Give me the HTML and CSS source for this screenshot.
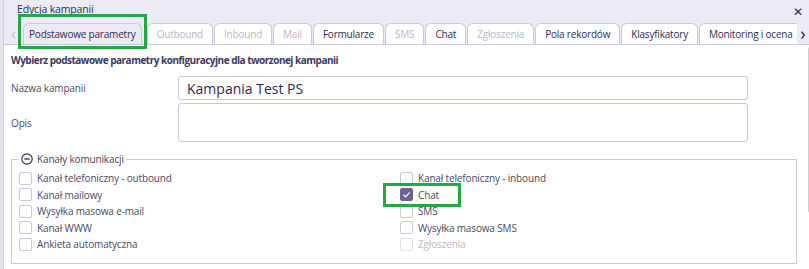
FILE: index.html
```html
<!DOCTYPE html>
<html lang="pl">
<head>
    <meta charset="UTF-8">
    <title>Edycja kampanii</title>
    <link rel="stylesheet" href="styles.css">
</head>
<body>

<div class="dialog">
    <!-- Header with title and tabs -->
    <div class="dialog-head">
        <div class="title-row">
            <span class="title">Edycja kampanii</span>
            <span class="close">&#x2715;</span>
        </div>
        <div class="tabs-row">
            <span class="arrow arrow-left">&#x2039;</span>
            <div class="tabs">
                <span class="tab active">Podstawowe parametry</span>
                <span class="tab disabled">Outbound</span>
                <span class="tab disabled">Inbound</span>
                <span class="tab disabled">Mail</span>
                <span class="tab">Formularze</span>
                <span class="tab disabled">SMS</span>
                <span class="tab">Chat</span>
                <span class="tab disabled">Zgłoszenia</span>
                <span class="tab">Pola rekordów</span>
                <span class="tab">Klasyfikatory</span>
                <span class="tab">Monitoring i ocena</span>
            </div>
            <span class="arrow arrow-right">&#x203A;</span>
        </div>
    </div>

    <!-- Content -->
    <div class="content">
        <p class="intro">Wybierz podstawowe parametry konfiguracyjne dla tworzonej kampanii</p>

        <div class="form-row">
            <label class="form-label" for="name">Nazwa kampanii</label>
            <input class="form-input" id="name" type="text" value="Kampania Test PS">
        </div>
        <div class="form-row">
            <label class="form-label" for="desc">Opis</label>
            <textarea class="form-text" id="desc"></textarea>
        </div>

        <fieldset class="channels">
            <legend>
                <svg class="collapse" width="12" height="12" viewBox="0 0 12 12">
                    <circle cx="6" cy="6" r="5.2" fill="none" stroke="#2e2a4f" stroke-width="1.2"/>
                    <line x1="3.3" y1="6" x2="8.7" y2="6" stroke="#2e2a4f" stroke-width="1.3"/>
                </svg>
                Kanały komunikacji
            </legend>
            <div class="checks">
                <div class="col">
                    <label class="check"><span class="box"></span>Kanał telefoniczny - outbound</label>
                    <label class="check"><span class="box"></span>Kanał mailowy</label>
                    <label class="check"><span class="box"></span>Wysyłka masowa e-mail</label>
                    <label class="check"><span class="box"></span>Kanał WWW</label>
                    <label class="check"><span class="box"></span>Ankieta automatyczna</label>
                </div>
                <div class="col">
                    <label class="check"><span class="box"></span>Kanał telefoniczny - inbound</label>
                    <label class="check"><span class="box checked">
                        <svg width="9" height="9" viewBox="0 0 9 9"><path d="M1.5 4.8 L3.6 6.8 L7.6 2.3" fill="none" stroke="#fff" stroke-width="1.2"/></svg>
                    </span>Chat</label>
                    <label class="check"><span class="box"></span>SMS</label>
                    <label class="check"><span class="box"></span>Wysyłka masowa SMS</label>
                    <label class="check disabled"><span class="box"></span>Zgłoszenia</label>
                </div>
            </div>
        </fieldset>
    </div>

    <div class="scrollbar"></div>
</div>

<!-- annotation highlights -->
<div class="mark mark-tab"></div>
<div class="mark mark-chat"></div>

</body>
</html>
```

FILE: styles.css
```css
body {
    margin: 0;
    padding: 0;
    font-family: "Open Sans", sans-serif;
    letter-spacing: -0.15px;
    color: #3b3760;
    background-color: #e4e4ea;
    overflow: hidden;
}
.dialog {
    position: relative;
    margin-left: 3px;
    height: 269px;
    background-color: #fff;
    border-left: 1px solid #cfcde2;
}
.dialog-head {
    background-color: #ecebf5;
}
.title-row {
    display: flex;
    justify-content: space-between;
    align-items: center;
    height: 22px;
    padding: 0 6px 0 13px;
}
.title {
    padding-bottom: 4px;
    font-size: 10.5px;
    color: #2e2a4f;
}
.close {
    font-size: 12px;
    color: #2e2a4f;
}
.tabs-row {
    display: flex;
    align-items: flex-end;
    height: 22px;
    border-bottom: 1px solid #c8c6e0;
}
.arrow {
    align-self: center;
    font-size: 18px;
    line-height: 18px;
    width: 19px;
    text-align: center;
}
.arrow-left {
    color: #c4c3cf;
}
.arrow-right {
    width: 12px;
    color: #2e2a4f;
    background-color: #ecebf5;
}
.tabs {
    display: flex;
    flex: 1;
    gap: 1px;
    overflow: hidden;
}
.tab {
    flex-shrink: 0;
    height: 21px;
    line-height: 20px;
    padding: 0 9px;
    font-size: 10px;
    letter-spacing: -0.2px;
    color: #2e2a4f;
    background-color: #fff;
    border: 1px solid #c8c6e0;
    border-bottom: none;
    border-radius: 6px 6px 0 0;
    box-sizing: border-box;
}
.tab.active {
    padding: 0 5px;
    background-color: #ecebf5;
    margin-right: 4px;
}
.tab.disabled {
    color: #b9b8c4;
}
.content {
    padding: 8px 12px 0 7px;
}
.intro {
    margin: 0 0 9px 0;
    font-size: 10px;
    font-weight: 700;
    letter-spacing: -0.5px;
    color: #3b3760;
}
.form-row {
    display: flex;
    align-items: center;
    margin-bottom: 3px;
}
.form-label {
    width: 167px;
    font-size: 10px;
    color: #4b4866;
}
.form-input,
.form-text {
    width: 570px;
    box-sizing: border-box;
    border: 1px solid #c8c6e0;
    border-radius: 3px;
    font-family: inherit;
    background: #fff;
}
.form-input {
    height: 24px;
    padding: 0 8px;
    font-size: 14px;
    letter-spacing: 0;
    color: #2e2a4f;
}
.form-text {
    height: 39px;
    resize: none;
}
.channels {
    margin: 10px 0 0 0;
    padding: 4px 0 10px 7px;
    width: 786px;
    box-sizing: border-box;
    border: 1px solid #c8c6e0;
}
.channels legend {
    display: flex;
    align-items: center;
    gap: 4px;
    padding: 0 2px 0 2px;
    font-size: 10px;
    color: #4a3f58;
}
.checks {
    display: flex;
}
.col {
    width: 381px;
}
.check {
    display: flex;
    align-items: center;
    height: 16.5px;
    font-size: 10px;
    color: #4b4866;
}
.check.disabled {
    color: #b9b8c4;
}
.box {
    display: flex;
    align-items: center;
    justify-content: center;
    width: 13px;
    height: 13px;
    margin-right: 5px;
    box-sizing: border-box;
    border: 1px solid #c8c6e0;
    border-radius: 2px;
}
.check.disabled .box {
    border-color: #e2e1ec;
}
.box.checked {
    background-color: #6e6290;
    border-color: #6e6290;
}
.scrollbar {
    position: absolute;
    right: -4px;
    top: 47px;
    width: 5px;
    height: 166px;
    border-radius: 3px;
    background-color: #cdcdd6;
}
.mark {
    position: absolute;
    border: 3px solid #22a846;
    box-sizing: border-box;
}
.mark-tab {
    left: 18px;
    top: 14px;
    width: 129px;
    height: 35px;
}
.mark-chat {
    left: 383px;
    top: 183px;
    width: 78px;
    height: 24px;
}
```
